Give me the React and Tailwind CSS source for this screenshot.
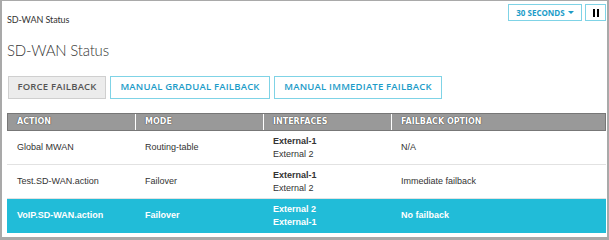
import React from 'react';

const rows = [
  { action: 'Global MWAN', mode: 'Routing-table', ifaces: ['External-1', 'External 2'], option: 'N/A' },
  { action: 'Test.SD-WAN.action', mode: 'Failover', ifaces: ['External-1', 'External 2'], option: 'Immediate failback' },
  { action: 'VoIP.SD-WAN.action', mode: 'Failover', ifaces: ['External 2', 'External-1'], option: 'No failback', selected: true },
];

const cols = ['w-[128px]', 'w-[128px]', 'w-[128px]', 'flex-1'];

const App = () => {
  return (
    <div className="w-[609px] h-[240px] bg-white border-x-2 border-b-[3px] border-t border-[#a9a9a9] flex flex-col pl-[5px] pr-[1px] font-['Lato',sans-serif]">
      <div className="flex justify-between items-start pt-[3px]">
        <div className="mt-[10px] text-[9px] leading-[12px] text-[#333] tracking-[-0.1px]">SD-WAN Status</div>
        <div className="flex gap-[3px]">
          <button className="h-[17px] w-[74px] border border-[#7fd3e6] flex items-center justify-center gap-[3px] text-[8px] font-bold text-[#1c9cc8] font-['Open_Sans',sans-serif]">
            30 SECONDS
            <span className="w-0 h-0 border-x-[3px] border-x-transparent border-t-[3px] border-t-[#1c9cc8]" />
          </button>
          <button className="h-[17px] w-[21px] border border-[#7fd3e6] flex items-center justify-center gap-[2px]">
            <span className="w-[2px] h-[8px] bg-black" />
            <span className="w-[2px] h-[8px] bg-black" />
          </button>
        </div>
      </div>

      <h1 className="mt-[14px] text-[15px] leading-[20px] font-light text-[#333] tracking-[-0.2px]">SD-WAN Status</h1>

      <div className="mt-[16px] flex gap-[4px] pl-[1px] font-['Open_Sans',sans-serif] text-[9.5px] font-semibold tracking-[0.2px]">
        <button className="h-[23px] w-[98px] border border-[#cfcfcf] bg-[#ececec] text-[#555]">FORCE FAILBACK</button>
        <button className="h-[23px] w-[160px] border border-[#7fd3e6] text-[#1c9cc8]">MANUAL GRADUAL FAILBACK</button>
        <button className="h-[23px] w-[168px] border border-[#7fd3e6] text-[#1c9cc8]">MANUAL IMMEDIATE FAILBACK</button>
      </div>

      <div className="mt-[14px] font-['Liberation_Sans',sans-serif] text-[9px]">
        <div className="flex h-[18px] bg-[#999] border border-[#777] text-white font-bold font-['DejaVu_Sans',sans-serif] text-[8px] [text-shadow:0_0_1px_#444,0_0_1px_#444]">
          {['ACTION', 'MODE', 'INTERFACES', 'FAILBACK OPTION'].map((h, i) => (
            <div key={h} className={`${cols[i]} flex items-center pl-[9px] ${i < 3 ? 'border-r border-white' : ''}`}>{h}</div>
          ))}
        </div>
        {rows.map((r) => (
          <div
            key={r.action}
            className={`flex items-center ${r.selected ? 'h-[34px] bg-[#21bcd8] text-white font-bold' : 'h-[34px] text-[#333] border-b border-[#e2e2e2]'}`}
          >
            <div className={`${cols[0]} pl-[10px]`}>{r.action}</div>
            <div className={`${cols[1]} pl-[10px]`}>{r.mode}</div>
            <div className={`${cols[2]} pl-[10px] leading-[13px]`}>
              <div className="font-bold">{r.ifaces[0]}</div>
              <div>{r.ifaces[1]}</div>
            </div>
            <div className={`${cols[3]} pl-[10px]`}>{r.option}</div>
          </div>
        ))}
      </div>
    </div>
  );
};

export default App;
